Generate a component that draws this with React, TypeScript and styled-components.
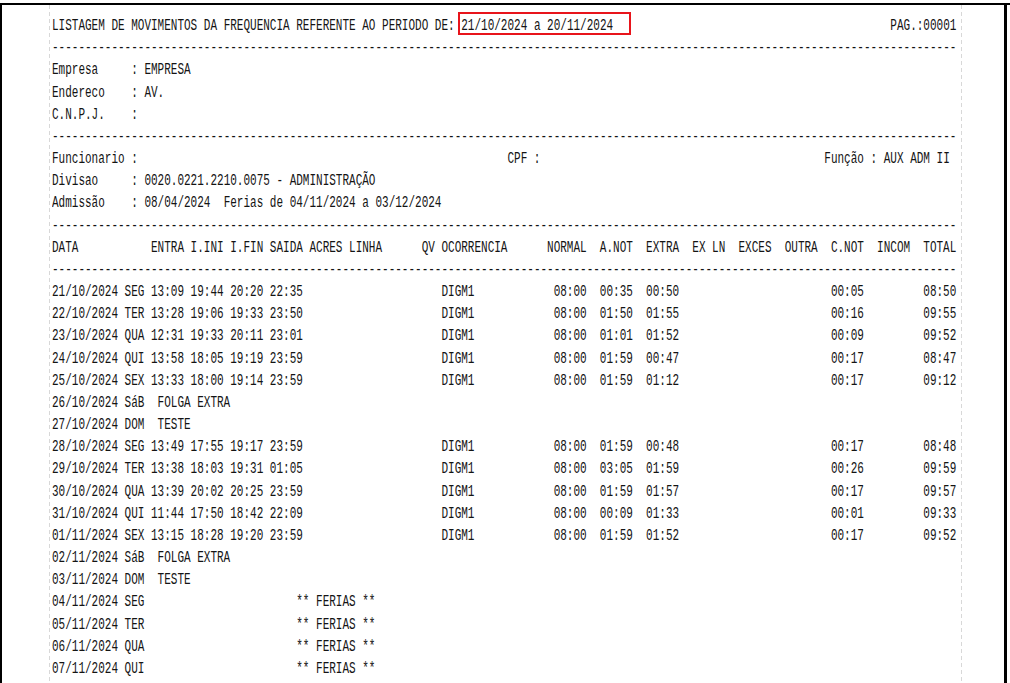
import React from "react";
import styled, { createGlobalStyle } from "styled-components";

const Global = createGlobalStyle`
  html, body { margin: 0; padding: 0; background: #fff; overflow: hidden; }
  #root { width: 1010px; height: 683px; }
`;

const Screen = styled.div`
  width: 1010px;
  height: 683px;
  box-sizing: border-box;
  padding-top: 3px;
  background: #fff;
  overflow: hidden;
`;

const Frame = styled.div`
  height: 100%;
  border-top: 2px solid #000;
`;

const Page = styled.div`
  position: relative;
  width: 1007px;
  height: 100%;
  box-sizing: border-box;
  border-left: 2px solid #000;
  border-right: 3px solid #000;
  padding-left: 47px;
  background: #fff;
`;

const guide = "repeating-linear-gradient(to bottom, #d8d8d8 0 4px, transparent 4px 7px)";

const Sheet = styled.div`
  width: 913px;
  height: 100%;
  box-sizing: border-box;
  padding: 10px 0 0 2.7px;
  background: ${guide} left top / 1px 100% no-repeat, ${guide} right top / 1px 100% no-repeat;
`;

const Report = styled.div`
  width: 137ch;
  font-family: "Liberation Mono", "DejaVu Sans Mono", monospace;
  font-size: 16px;
  line-height: 22.17px;
  color: #141414;
  white-space: pre;
  transform: scaleX(0.6875);
  transform-origin: left top;
`;

const TitleRow = styled.div`
  display: flex;
  justify-content: space-between;
`;

const Rule = styled.div`
  overflow: hidden;
`;

const InfoRow = styled.div<{ $cols: string }>`
  display: grid;
  grid-template-columns: ${(p) => p.$cols};
`;

const Field = styled.span`
  overflow: visible;
`;

const TEMPLATE = "11ch 4ch 6ch 6ch 6ch 6ch 6ch 11ch 3ch 16ch 8ch 7ch 7ch 7ch 7ch 7ch 7ch 7ch 5ch";

const TableRow = styled.div`
  display: grid;
  grid-template-columns: ${TEMPLATE};
`;

const Cell = styled.span<{ $right?: boolean }>`
  text-align: ${(p) => (p.$right ? "right" : "left")};
  padding-right: ${(p) => (p.$right ? "2ch" : "0")};
`;

const Note = styled.span<{ $indent: number }>`
  grid-column: 3 / -1;
  padding-left: ${(p) => p.$indent}ch;
`;

const Highlight = styled.div`
  position: absolute;
  left: 456px;
  top: 7px;
  width: 173px;
  height: 23px;
  box-sizing: border-box;
  border: 2px solid #e8141b;
  pointer-events: none;
`;

const DASHES = "-".repeat(137);

const HEADERS = [
  "DATA", "", "ENTRA", "I.INI", "I.FIN", "SAIDA", "ACRES", "LINHA", "QV", "OCORRENCIA",
  "NORMAL", "A.NOT", "EXTRA", "EX LN", "EXCES", "OUTRA", "C.NOT", "INCOM", "TOTAL",
];

type Work = {
  kind: "work";
  date: string;
  day: string;
  times: [string, string, string, string];
  occ: string;
  normal: string;
  anot: string;
  extra: string;
  cnot: string;
  total: string;
};
type Off = { kind: "note"; date: string; day: string; text: string; indent: number };
type Plain = { kind: "plain"; date: string; day: string };
type Row = Work | Off | Plain;

const w = (
  date: string, day: string, a: string, b: string, c: string, d: string,
  anot: string, extra: string, cnot: string, total: string
): Work => ({
  kind: "work", date, day, times: [a, b, c, d], occ: "DIGM1", normal: "08:00", anot, extra, cnot, total,
});

const ROWS: Row[] = [
  w("21/10/2024", "SEG", "13:09", "19:44", "20:20", "22:35", "00:35", "00:50", "00:05", "08:50"),
  w("22/10/2024", "TER", "13:28", "19:06", "19:33", "23:50", "01:50", "01:55", "00:16", "09:55"),
  w("23/10/2024", "QUA", "12:31", "19:33", "20:11", "23:01", "01:01", "01:52", "00:09", "09:52"),
  w("24/10/2024", "QUI", "13:58", "18:05", "19:19", "23:59", "01:59", "00:47", "00:17", "08:47"),
  w("25/10/2024", "SEX", "13:33", "18:00", "19:14", "23:59", "01:59", "01:12", "00:17", "09:12"),
  { kind: "note", date: "26/10/2024", day: "SáB", text: "FOLGA EXTRA", indent: 1 },
  { kind: "note", date: "27/10/2024", day: "DOM", text: "TESTE", indent: 1 },
  w("28/10/2024", "SEG", "13:49", "17:55", "19:17", "23:59", "01:59", "00:48", "00:17", "08:48"),
  w("29/10/2024", "TER", "13:38", "18:03", "19:31", "01:05", "03:05", "01:59", "00:26", "09:59"),
  w("30/10/2024", "QUA", "13:39", "20:02", "20:25", "23:59", "01:59", "01:57", "00:17", "09:57"),
  w("31/10/2024", "QUI", "11:44", "17:50", "18:42", "22:09", "00:09", "01:33", "00:01", "09:33"),
  w("01/11/2024", "SEX", "13:15", "18:28", "19:20", "23:59", "01:59", "01:52", "00:17", "09:52"),
  { kind: "note", date: "02/11/2024", day: "SáB", text: "FOLGA EXTRA", indent: 1 },
  { kind: "note", date: "03/11/2024", day: "DOM", text: "TESTE", indent: 1 },
  { kind: "note", date: "04/11/2024", day: "SEG", text: "** FERIAS **", indent: 22 },
  { kind: "note", date: "05/11/2024", day: "TER", text: "** FERIAS **", indent: 22 },
  { kind: "note", date: "06/11/2024", day: "QUA", text: "** FERIAS **", indent: 22 },
  { kind: "note", date: "07/11/2024", day: "QUI", text: "** FERIAS **", indent: 22 },
];

function DataRow({ row }: { row: Row }) {
  if (row.kind === "work") {
    return (
      <TableRow>
        <Cell>{row.date}</Cell>
        <Cell>{row.day}</Cell>
        {row.times.map((t, i) => (
          <Cell key={i}>{t}</Cell>
        ))}
        <Cell />
        <Cell />
        <Cell />
        <Cell>{row.occ}</Cell>
        <Cell $right>{row.normal}</Cell>
        <Cell>{row.anot}</Cell>
        <Cell>{row.extra}</Cell>
        <Cell />
        <Cell />
        <Cell />
        <Cell>{row.cnot}</Cell>
        <Cell />
        <Cell>{row.total}</Cell>
      </TableRow>
    );
  }
  return (
    <TableRow>
      <Cell>{row.date}</Cell>
      <Cell>{row.day}</Cell>
      {row.kind === "note" && <Note $indent={row.indent}>{row.text}</Note>}
    </TableRow>
  );
}

export default function App() {
  return (
    <>
      <Global />
      <Screen>
        <Frame>
          <Page>
            <Sheet>
              <Report>
                <TitleRow>
                  <span>LISTAGEM DE MOVIMENTOS DA FREQUENCIA REFERENTE AO PERIODO DE: 21/10/2024 a 20/11/2024</span>
                  <span>PAG.:00001</span>
                </TitleRow>
                <Rule>{DASHES}</Rule>
                <InfoRow $cols="12ch 1fr">
                  <Field>Empresa</Field>
                  <Field>: EMPRESA</Field>
                </InfoRow>
                <InfoRow $cols="12ch 1fr">
                  <Field>Endereco</Field>
                  <Field>: AV.</Field>
                </InfoRow>
                <InfoRow $cols="12ch 1fr">
                  <Field>C.N.P.J.</Field>
                  <Field>:</Field>
                </InfoRow>
                <Rule>{DASHES}</Rule>
                <InfoRow $cols="12ch 57ch 48ch 1fr">
                  <Field>Funcionario</Field>
                  <Field>:</Field>
                  <Field>CPF :</Field>
                  <Field>Função : AUX ADM II</Field>
                </InfoRow>
                <InfoRow $cols="12ch 1fr">
                  <Field>Divisao</Field>
                  <Field>: 0020.0221.2210.0075 - ADMINISTRAÇÃO</Field>
                </InfoRow>
                <InfoRow $cols="12ch 1fr">
                  <Field>Admissão</Field>
                  <Field>: 08/04/2024  Ferias de 04/11/2024 a 03/12/2024</Field>
                </InfoRow>
                <Rule>{DASHES}</Rule>
                <TableRow>
                  {HEADERS.map((h, i) => (
                    <Cell key={i} $right={h === "NORMAL"}>
                      {h}
                    </Cell>
                  ))}
                </TableRow>
                <Rule>{DASHES}</Rule>
                {ROWS.map((r) => (
                  <DataRow key={r.date} row={r} />
                ))}
              </Report>
            </Sheet>
            <Highlight />
          </Page>
        </Frame>
      </Screen>
    </>
  );
}
